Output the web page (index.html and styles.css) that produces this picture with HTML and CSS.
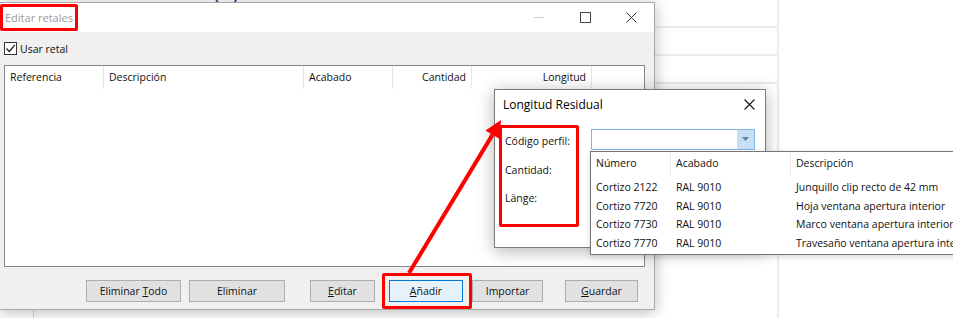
FILE: index.html
```html
<!DOCTYPE html>
<html lang="es">
<head>
    <meta charset="UTF-8">
    <title>Editar retales</title>
    <link rel="stylesheet" href="styles.css">
</head>
<body>
    <div class="desktop">
        <div class="app-heading">Nuevo retal 4 (0)</div>
        <div class="side-panel">
            <div class="side-row"></div>
            <div class="side-row"></div>
            <div class="side-row"></div>
        </div>
        <div class="app-rule"></div>

        <!-- main window -->
        <div class="win">
            <div class="titlebar">
                <span class="win-title">Editar retales</span>
                <div class="controls">
                    <span class="ctl ctl-min"></span>
                    <span class="ctl ctl-max"><span></span></span>
                    <span class="ctl ctl-close">
                        <svg width="11" height="11" viewBox="0 0 11 11"><path d="M0.5 0.5 L10.5 10.5 M10.5 0.5 L0.5 10.5" stroke="#333" stroke-width="1"/></svg>
                    </span>
                </div>
            </div>
            <div class="win-body">
                <label class="check">
                    <span class="box">
                        <svg width="11" height="11" viewBox="0 0 11 11"><path d="M1.5 5.5 L4.3 8.5 L9.8 2" fill="none" stroke="#222" stroke-width="1.2"/></svg>
                    </span>
                    Usar retal
                </label>
                <div class="list">
                    <div class="list-head">
                        <span>Referencia</span>
                        <span>Descripción</span>
                        <span>Acabado</span>
                        <span class="num">Cantidad</span>
                        <span class="num">Longitud</span>
                    </div>
                </div>
                <div class="buttons">
                    <button class="btn b-todo">Eliminar <u>T</u>odo</button>
                    <button class="btn b-elim">Eliminar</button>
                    <button class="btn b-edit"><u>E</u>ditar</button>
                    <button class="btn btn-default b-add"><u>A</u>ñadir</button>
                    <button class="btn b-imp">Importar</button>
                    <button class="btn b-save"><u>G</u>uardar</button>
                </div>
            </div>
        </div>

        <!-- child dialog -->
        <div class="popup">
            <div class="popup-title">
                <span>Longitud Residual</span>
                <svg width="11" height="11" viewBox="0 0 11 11"><path d="M0.5 0.5 L10.5 10.5 M10.5 0.5 L0.5 10.5" stroke="#111" stroke-width="1.1"/></svg>
            </div>
            <div class="popup-form">
                <span class="field-label">Código perfil:</span>
                <div class="combo">
                    <span class="combo-btn">
                        <svg width="7" height="4" viewBox="0 0 7 4"><path d="M0 0 H7 L3.5 4 Z" fill="#6d7f8f"/></svg>
                    </span>
                </div>
                <span class="field-label">Cantidad:</span>
                <span></span>
                <span class="field-label">Länge:</span>
                <span></span>
            </div>
        </div>

        <div class="dropdown">
            <div class="drop-row drop-head">
                <span>Número</span>
                <span>Acabado</span>
                <span>Descripción</span>
            </div>
            <div class="drop-row">
                <span>Cortizo 2122</span><span>RAL 9010</span><span>Junquillo clip recto de 42 mm</span>
            </div>
            <div class="drop-row">
                <span>Cortizo 7720</span><span>RAL 9010</span><span>Hoja ventana apertura interior</span>
            </div>
            <div class="drop-row">
                <span>Cortizo 7730</span><span>RAL 9010</span><span>Marco ventana apertura interior</span>
            </div>
            <div class="drop-row">
                <span>Cortizo 7770</span><span>RAL 9010</span><span>Travesaño ventana apertura interior</span>
            </div>
        </div>

        <!-- red annotations -->
        <div class="mark mark-title"></div>
        <div class="mark mark-add"></div>
        <div class="mark mark-labels"></div>
        <svg class="arrow" width="953" height="318" viewBox="0 0 953 318">
            <line x1="409" y1="273" x2="492.6" y2="134.6" stroke="#f00" stroke-width="4"/>
            <polygon points="501,120 499.5,139 485.5,130.5" fill="#f00"/>
        </svg>
    </div>
</body>
</html>
```

FILE: styles.css
```css
body {
    margin: 0;
    font-family: "Segoe UI", "Open Sans", sans-serif;
    font-size: 10.5px;
    color: #111;
    background: #fff;
}
.desktop {
    position: relative;
    width: 953px;
    height: 318px;
    overflow: hidden;
    background: #fff;
}
.app-heading {
    position: absolute;
    left: 70px;
    top: -24px;
    font-size: 22px;
    color: #1f3f8f;
}
.side-panel {
    position: absolute;
    left: 600px;
    top: 0;
    width: 177px;
    height: 318px;
    border-right: 2px solid #ececec;
}
.side-row {
    height: 26px;
    border-bottom: 2px solid #ebebeb;
}
.app-rule {
    position: absolute;
    left: 33px;
    top: 300px;
    width: 1px;
    height: 18px;
    background: #d8d8d8;
}

/* main window */
.win {
    position: absolute;
    left: 0;
    top: 2px;
    width: 654px;
    height: 306px;
    background: #f0f0f0;
    border: 1px solid #a9a9a9;
    border-left: none;
    box-shadow: 0 2px 14px rgba(0,0,0,0.28);
}
.titlebar {
    height: 29px;
    background: #fff;
    display: flex;
    align-items: center;
    padding-left: 5px;
}
.win-title {
    color: #9a9a9a;
    font-size: 11px;
}
.controls {
    margin-left: auto;
    display: flex;
    align-items: center;
    height: 100%;
}
.ctl {
    width: 46px;
    height: 100%;
    display: flex;
    align-items: center;
    justify-content: center;
}
.ctl-min::before {
    content: "";
    width: 10px;
    height: 1px;
    background: #cfcfcf;
}
.ctl-max span {
    width: 9px;
    height: 9px;
    border: 1px solid #444;
}
.win-body {
    padding: 9px 0 0 4px;
}
.check {
    display: flex;
    align-items: center;
    gap: 3px;
    height: 15px;
    margin-bottom: 9px;
}
.box {
    width: 11px;
    height: 11px;
    border: 1px solid #333;
    background: #fff;
    display: flex;
}
.list {
    width: 639px;
    height: 200px;
    background: #fff;
    border: 1px solid #828790;
}
.list-head {
    display: grid;
    grid-template-columns: 99px 200px 89px 79px 120px;
    height: 23px;
}
.list-head span {
    border-right: 1px solid #e5e5e5;
    padding: 0 5px;
    line-height: 22px;
}
.list-head .num {
    text-align: right;
}
.buttons {
    display: flex;
    margin-top: 13px;
    padding-left: 82px;
}
.btn {
    height: 22px;
    font: inherit;
    color: #111;
    background: #e1e1e1;
    border: 1px solid #adadad;
    padding: 0;
}
.btn u {
    text-decoration-thickness: 1px;
}
.btn-default {
    background: #e5f1fb;
    border-color: #0078d7;
}
.b-todo { width: 95px; }
.b-elim { width: 96px; margin-left: 8px; }
.b-edit { width: 65px; margin-left: 25px; }
.b-add  { width: 74px; margin-left: 14px; }
.b-imp  { width: 71px; margin-left: 9px; }
.b-save { width: 73px; margin-left: 22px; }

/* child dialog */
.popup {
    position: absolute;
    left: 494px;
    top: 89px;
    width: 270px;
    height: 157px;
    background: #fff;
    border: 1px solid #7a7a7a;
    box-shadow: 0 3px 16px rgba(0,0,0,0.3);
}
.popup-title {
    height: 29px;
    display: flex;
    align-items: center;
    justify-content: space-between;
    padding: 0 10px 0 8px;
    font-size: 12px;
    color: #000;
}
.popup-form {
    display: grid;
    grid-template-columns: 86px 164px;
    grid-auto-rows: 28.5px;
    padding: 10px 0 0 10px;
    align-items: center;
}
.popup-form .field-label {
    margin-top: -4px;
}
.combo {
    position: relative;
    height: 19px;
    margin-top: -8px;
    border: 1px solid #7eb4ea;
    background: #fff;
}
.combo-btn {
    position: absolute;
    right: 0;
    top: 0;
    width: 17px;
    height: 19px;
    background: #c7dff5;
    display: flex;
    align-items: center;
    justify-content: center;
}

/* dropdown of the combo */
.dropdown {
    position: absolute;
    left: 590px;
    top: 151px;
    width: 380px;
    height: 102px;
    background: #fff;
    border: 1px solid #767676;
    box-shadow: 0 2px 6px rgba(0,0,0,0.15);
}
.drop-row {
    display: grid;
    grid-template-columns: 80px 120px 180px;
    height: 18.5px;
    line-height: 18px;
    white-space: nowrap;
}
.drop-row span {
    padding-left: 5px;
    overflow: hidden;
}
.drop-head {
    height: 26px;
    line-height: 22px;
}
.drop-head span {
    border-right: 1px solid #ececec;
}

/* annotations */
.mark {
    position: absolute;
    border: 3px solid #f00;
    border-radius: 2px;
}
.mark-title {
    left: 0;
    top: 4px;
    width: 72px;
    height: 21px;
}
.mark-add {
    left: 382px;
    top: 273px;
    width: 84px;
    height: 30px;
}
.mark-labels {
    left: 499px;
    top: 125px;
    width: 74px;
    height: 96px;
}
.arrow {
    position: absolute;
    left: 0;
    top: 0;
}
```
